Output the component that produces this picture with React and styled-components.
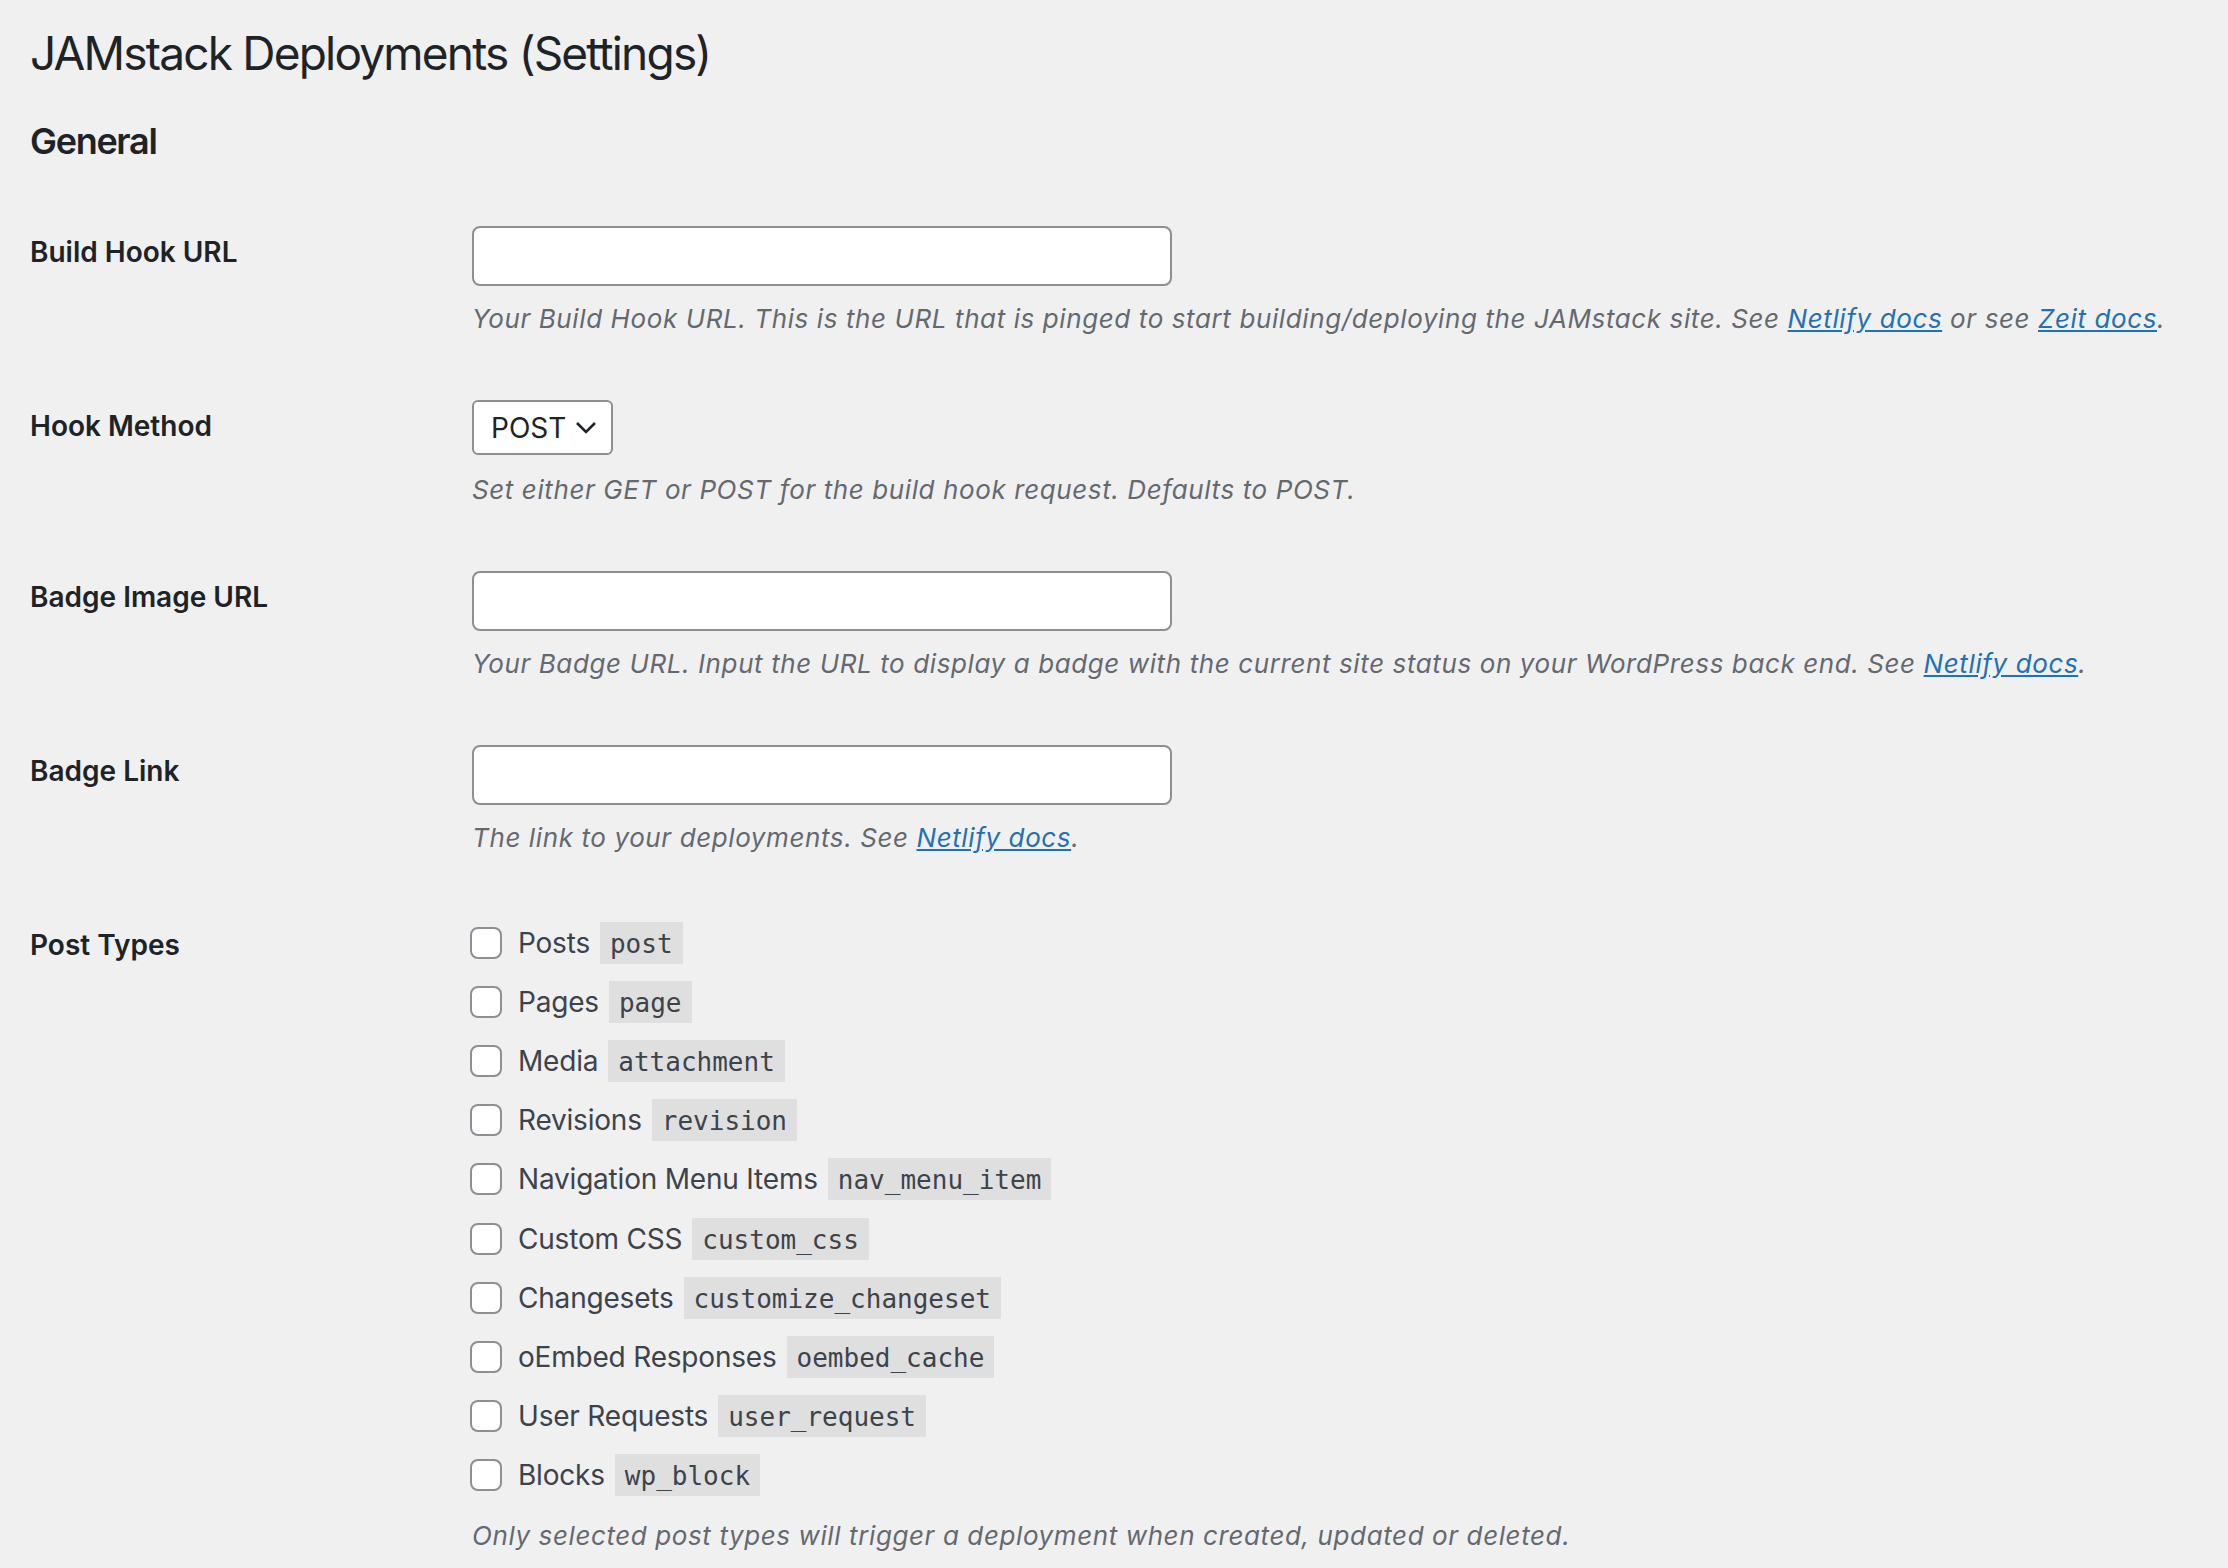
import React from 'react'
import styled, { createGlobalStyle } from 'styled-components'

const colors = {
  page: '#f0f0f1',
  heading: '#1d2327',
  text: '#3c434a',
  muted: '#646970',
  border: '#8c8f94',
  link: '#2271b1',
  codeBg: 'rgba(0, 0, 0, 0.07)',
  white: '#ffffff',
}

const POST_TYPES = [
  { label: 'Posts', slug: 'post' },
  { label: 'Pages', slug: 'page' },
  { label: 'Media', slug: 'attachment' },
  { label: 'Revisions', slug: 'revision' },
  { label: 'Navigation Menu Items', slug: 'nav_menu_item' },
  { label: 'Custom CSS', slug: 'custom_css' },
  { label: 'Changesets', slug: 'customize_changeset' },
  { label: 'oEmbed Responses', slug: 'oembed_cache' },
  { label: 'User Requests', slug: 'user_request' },
  { label: 'Blocks', slug: 'wp_block' },
]

const GlobalStyle = createGlobalStyle`
  html, body {
    margin: 0;
    padding: 0;
    background: ${colors.page};
    overflow: hidden;
  }
  body {
    font-family: Inter, "Liberation Sans", sans-serif;
    color: ${colors.text};
  }
`

const Wrap = styled.div`
  padding: 23px 30px 0;
`

const PageTitle = styled.h1`
  margin: 0;
  font-size: 46px;
  font-weight: 400;
  line-height: 60px;
  letter-spacing: -1.8px;
  color: ${colors.heading};
`

const SectionTitle = styled.h2`
  margin: 35px 0 31px;
  font-size: 36px;
  font-weight: 600;
  line-height: 47px;
  letter-spacing: -1.3px;
  color: ${colors.heading};
`

const FormRow = styled.div`
  display: grid;
  grid-template-columns: 442px 1fr;
`

const FieldLabel = styled.div`
  padding-top: 38px;
  font-size: 28px;
  font-weight: 600;
  line-height: 36.4px;
  color: ${colors.heading};
`

const FieldCell = styled.div`
  padding: ${(p) => p.$top ?? 30}px 0 31px;
`

const TextInput = styled.input.attrs(() => ({ type: 'text' }))`
  display: block;
  box-sizing: border-box;
  width: 700px;
  height: 60px;
  margin: 0;
  border: 2px solid ${colors.border};
  border-radius: 8px;
  background: ${colors.white};
`

const SelectBox = styled.div`
  display: flex;
  align-items: center;
  justify-content: space-between;
  box-sizing: border-box;
  width: 141px;
  height: 55px;
  padding: 0 14px 0 17px;
  border: 2px solid ${colors.border};
  border-radius: 6px;
  background: ${colors.white};
  font-size: 28px;
  color: ${colors.heading};
`

const Description = styled.p`
  margin: ${(p) => p.$gap ?? 13}px 0 0;
  font-size: 26px;
  font-style: italic;
  line-height: 40px;
  letter-spacing: 0.6px;
  color: ${colors.muted};
  white-space: nowrap;
`

const DocLink = styled.a`
  color: ${colors.link};
  text-decoration: underline;
`

const TypeList = styled.div`
  display: flex;
  flex-direction: column;
`

const TypeItem = styled.label`
  display: flex;
  align-items: center;
  height: 59.2px;
  font-size: 28px;
  letter-spacing: -0.2px;
  color: ${colors.text};
`

const Checkbox = styled.input.attrs(() => ({ type: 'checkbox' }))`
  appearance: none;
  box-sizing: border-box;
  flex: none;
  width: 32px;
  height: 32px;
  margin: 0 16px 0 -2px;
  border: 2px solid ${colors.border};
  border-radius: 8px;
  background: ${colors.white};
`

const Slug = styled.code`
  margin-left: 10px;
  padding: 6px 10px 4px;
  background: ${colors.codeBg};
  font-family: "DejaVu Sans Mono", "Liberation Mono", monospace;
  font-size: 26px;
  line-height: 32px;
  letter-spacing: 0;
  color: ${colors.text};
`

const Chevron = () => (
  <svg width="22" height="14" viewBox="0 0 22 14" fill="none">
    <path d="M2 2l9 9 9-9" stroke={colors.heading} strokeWidth="2.6" />
  </svg>
)

export default function App() {
  return (
    <Wrap>
      <GlobalStyle />
      <PageTitle>JAMstack Deployments (Settings)</PageTitle>
      <SectionTitle>General</SectionTitle>

      <FormRow>
        <FieldLabel>Build Hook URL</FieldLabel>
        <FieldCell>
          <TextInput />
          <Description>
            Your Build Hook URL. This is the URL that is pinged to start building/deploying the JAMstack site. See{' '}
            <DocLink href="#">Netlify docs</DocLink> or see <DocLink href="#">Zeit docs</DocLink>.
          </Description>
        </FieldCell>
      </FormRow>

      <FormRow>
        <FieldLabel>Hook Method</FieldLabel>
        <FieldCell>
          <SelectBox>
            POST
            <Chevron />
          </SelectBox>
          <Description $gap={15}>Set either GET or POST for the build hook request. Defaults to POST.</Description>
        </FieldCell>
      </FormRow>

      <FormRow>
        <FieldLabel>Badge Image URL</FieldLabel>
        <FieldCell>
          <TextInput />
          <Description>
            Your Badge URL. Input the URL to display a badge with the current site status on your WordPress back end. See{' '}
            <DocLink href="#">Netlify docs</DocLink>.
          </Description>
        </FieldCell>
      </FormRow>

      <FormRow>
        <FieldLabel>Badge Link</FieldLabel>
        <FieldCell>
          <TextInput />
          <Description>
            The link to your deployments. See <DocLink href="#">Netlify docs</DocLink>.
          </Description>
        </FieldCell>
      </FormRow>

      <FormRow>
        <FieldLabel>Post Types</FieldLabel>
        <FieldCell $top={24}>
          <TypeList>
            {POST_TYPES.map((t) => (
              <TypeItem key={t.slug}>
                <Checkbox />
                {t.label}
                <Slug>{t.slug}</Slug>
              </TypeItem>
            ))}
          </TypeList>
          <Description $gap={11}>Only selected post types will trigger a deployment when created, updated or deleted.</Description>
        </FieldCell>
      </FormRow>
    </Wrap>
  )
}
